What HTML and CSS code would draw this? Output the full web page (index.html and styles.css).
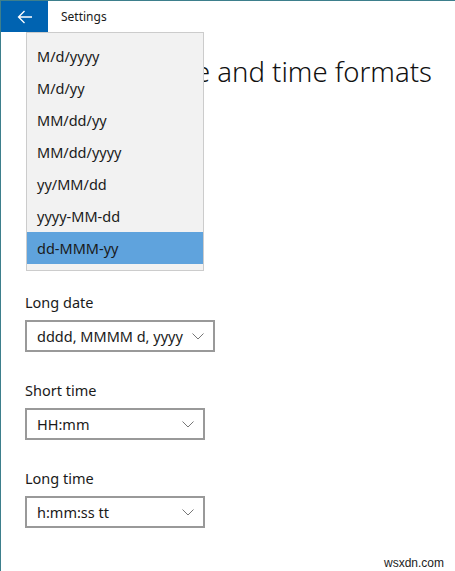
FILE: index.html
```html
<!DOCTYPE html>
<html>
<head>
<meta charset="utf-8">
<link rel="stylesheet" href="styles.css">
</head>
<body>
<div class="window">
  <div class="titlebar">
    <div class="back">
      <svg width="16" height="14" viewBox="0 0 16 14"><path d="M15 7H1.5M7.5 1L1.5 7l6 6" fill="none" stroke="#fff" stroke-width="1.3"/></svg>
    </div>
    <div class="title">Settings</div>
  </div>
  <div class="content">
    <h1 class="heading">Change date and time formats</h1>
    <div class="field covered">
      <div class="label">Short date</div>
      <div class="select"><span>dd-MMM-yy</span><svg class="chev" width="12" height="7" viewBox="0 0 12 7"><path d="M0.5 0.5L6 6L11.5 0.5" fill="none" stroke="#777" stroke-width="1"/></svg></div>
    </div>
    <div class="field">
      <div class="label">Long date</div>
      <div class="select wide"><span>dddd, MMMM d, yyyy</span><svg class="chev" width="12" height="7" viewBox="0 0 12 7"><path d="M0.5 0.5L6 6L11.5 0.5" fill="none" stroke="#777" stroke-width="1"/></svg></div>
    </div>
    <div class="field">
      <div class="label">Short time</div>
      <div class="select"><span>HH:mm</span><svg class="chev" width="12" height="7" viewBox="0 0 12 7"><path d="M0.5 0.5L6 6L11.5 0.5" fill="none" stroke="#777" stroke-width="1"/></svg></div>
    </div>
    <div class="field">
      <div class="label">Long time</div>
      <div class="select"><span>h:mm:ss tt</span><svg class="chev" width="12" height="7" viewBox="0 0 12 7"><path d="M0.5 0.5L6 6L11.5 0.5" fill="none" stroke="#777" stroke-width="1"/></svg></div>
    </div>
  </div>
  <ul class="popup">
    <li>M/d/yyyy</li>
    <li>M/d/yy</li>
    <li>MM/dd/yy</li>
    <li>MM/dd/yyyy</li>
    <li>yy/MM/dd</li>
    <li>yyyy-MM-dd</li>
    <li class="selected">dd-MMM-yy</li>
  </ul>
  <div class="watermark">wsxdn.com</div>
</div>
</body>
</html>
```
FILE: styles.css
```css
html, body {
  margin: 0;
  padding: 0;
  background: #fff;
}
body {
  font-family: "Noto Sans", "Open Sans", sans-serif;
  color: #1a1a1a;
}
.window {
  position: relative;
  width: 455px;
  height: 571px;
  box-sizing: border-box;
  border-top: 1px solid #3d7f8c;
  border-left: 1px solid #3d7f8c;
  overflow: hidden;
}
.titlebar {
  display: flex;
  align-items: center;
  height: 31px;
}
.back {
  width: 47px;
  height: 31px;
  background: #0063b1;
  display: flex;
  align-items: center;
  justify-content: center;
}
.title {
  margin-left: 13px;
  font-size: 12px;
}
.content {
  padding: 0 24px;
}
.heading {
  margin: 20px 0 0 0;
  padding-left: 26px;
  font-size: 27.5px;
  font-weight: 300;
  line-height: 40px;
  height: 40px;
  white-space: nowrap;
  color: #111;
}
.field {
  margin-top: 28px;
}
.field.covered {
  margin-top: 112px;
  visibility: hidden;
}
.label {
  font-size: 14.5px;
  line-height: 20px;
  margin-bottom: 8px;
}
.select {
  display: flex;
  align-items: center;
  justify-content: space-between;
  width: 180px;
  height: 32px;
  box-sizing: border-box;
  border: 2px solid #999;
  padding: 0 9px 0 10px;
  font-size: 14.5px;
  background: #fff;
}
.select.wide {
  width: 190px;
}
.popup {
  position: absolute;
  left: 25px;
  top: 31px;
  width: 178px;
  height: 239px;
  box-sizing: border-box;
  margin: 0;
  padding: 7px 0 0 0;
  list-style: none;
  background: #f2f2f2;
  border: 1px solid #cccccc;
}
.popup li {
  height: 32px;
  line-height: 32px;
  padding-left: 10px;
  font-size: 14.5px;
  color: #1a1a1a;
}
.popup li.selected {
  background: #5fa3dd;
}
.watermark {
  position: absolute;
  right: 11px;
  bottom: 1px;
  font-family: "Liberation Sans", Arial, sans-serif;
  font-size: 12px;
  color: #222;
}
```
